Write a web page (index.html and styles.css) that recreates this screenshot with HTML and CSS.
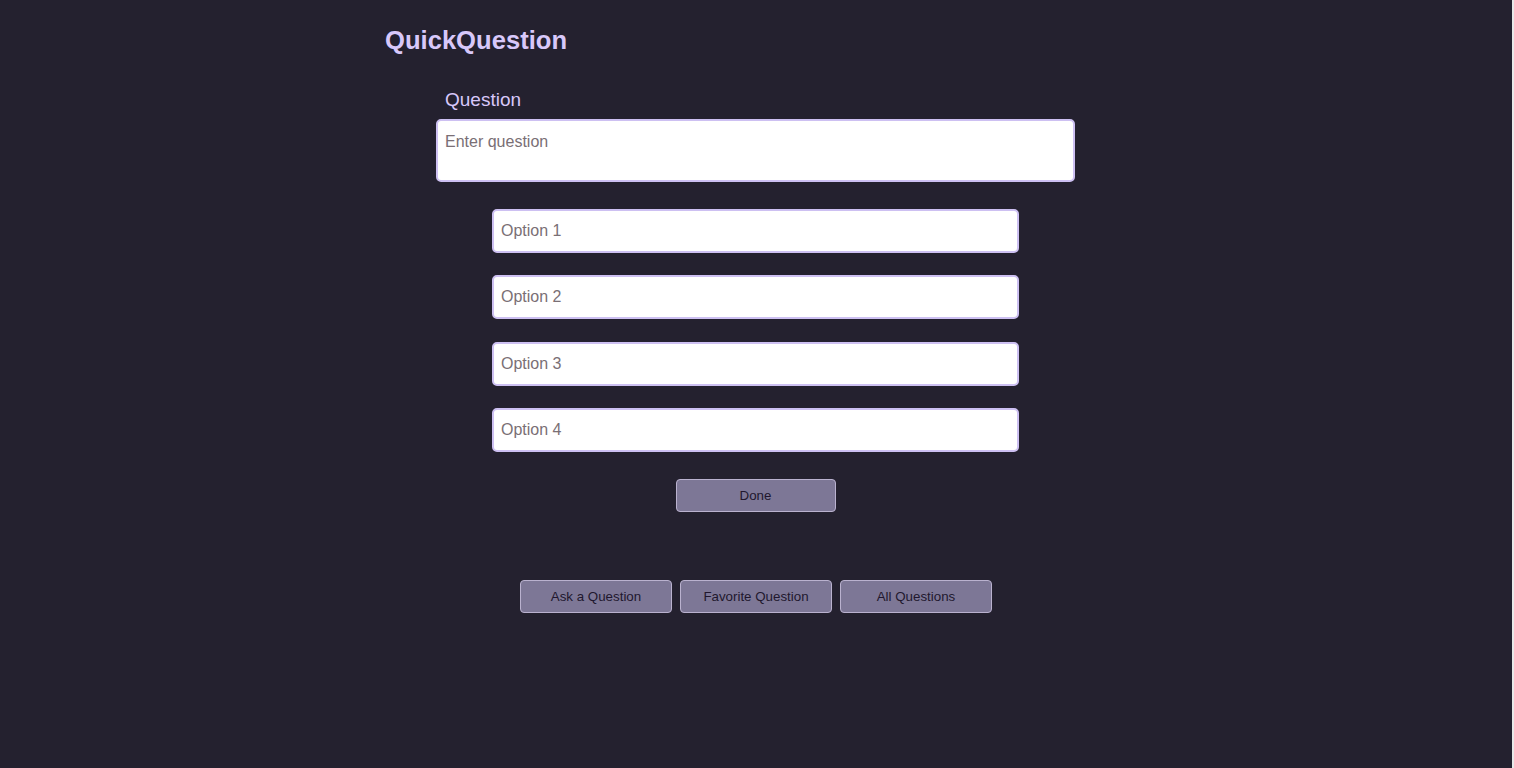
FILE: index.html
```html
<!DOCTYPE html>
<html>
<head>
<meta charset="utf-8">
<link rel="stylesheet" href="styles.css">
</head>
<body>
<div class="page">
  <div class="container">
    <h1 class="brand">QuickQuestion</h1>
    <form class="form">
      <label class="label">Question</label>
      <textarea class="question" placeholder="Enter question"></textarea>
      <div class="options">
        <input class="option" type="text" placeholder="Option 1">
        <input class="option" type="text" placeholder="Option 2">
        <input class="option" type="text" placeholder="Option 3">
        <input class="option" type="text" placeholder="Option 4">
      </div>
      <button type="button" class="btn done">Done</button>
    </form>
    <nav class="nav">
      <button type="button" class="btn navbtn">Ask a Question</button>
      <button type="button" class="btn navbtn">Favorite Question</button>
      <button type="button" class="btn navbtn">All Questions</button>
    </nav>
  </div>
</div>
</body>
</html>
```
FILE: styles.css
```css
html, body {
  margin: 0;
  padding: 0;
  background: #e8e8e8;
}
body {
  font-family: "Liberation Sans", Arial, sans-serif;
}
.page {
  width: 1512px;
  height: 768px;
  background: #24212f;
}
.container {
  width: 756px;
  margin: 0 auto;
  padding-top: 25px;
  display: flex;
  flex-direction: column;
}
.brand {
  margin: 0 0 0 7px;
  font-size: 25.6px;
  line-height: 30px;
  font-weight: bold;
  color: #d8c8fa;
}
.form {
  margin-top: 34px;
  margin-right: 1px;
  display: flex;
  flex-direction: column;
  align-items: center;
}
.label {
  align-self: flex-start;
  margin-left: 67px;
  font-size: 19px;
  line-height: 22px;
  color: #d8c8fa;
}
.question {
  box-sizing: border-box;
  width: 639px;
  height: 63px;
  margin-top: 8px;
  padding: 12px 7px;
  border: 2px solid #cdc0f2;
  border-radius: 5px;
  background: #fff;
  font-family: "Liberation Sans", Arial, sans-serif;
  font-size: 16px;
  resize: none;
  outline: none;
}
.options {
  margin-top: 27px;
  display: flex;
  flex-direction: column;
  gap: 22.3px;
}
.option {
  box-sizing: border-box;
  width: 527px;
  height: 44px;
  padding: 0 7px;
  border: 2px solid #cdc0f2;
  border-radius: 5px;
  background: #fff;
  font-family: "Liberation Sans", Arial, sans-serif;
  font-size: 16px;
  outline: none;
}
.question::placeholder, .option::placeholder {
  color: #7a6f75;
}
.btn {
  box-sizing: border-box;
  height: 33px;
  background: #7d7796;
  border: 1px solid #bab2cf;
  border-radius: 4px;
  color: #21172e;
  font-family: "Liberation Sans", Arial, sans-serif;
  font-size: 13.333px;
  padding: 0;
}
.done {
  width: 160px;
  margin-top: 27px;
}
.nav {
  margin-top: 68px;
  display: flex;
  justify-content: center;
  gap: 8px;
}
.navbtn {
  width: 152px;
}
```
